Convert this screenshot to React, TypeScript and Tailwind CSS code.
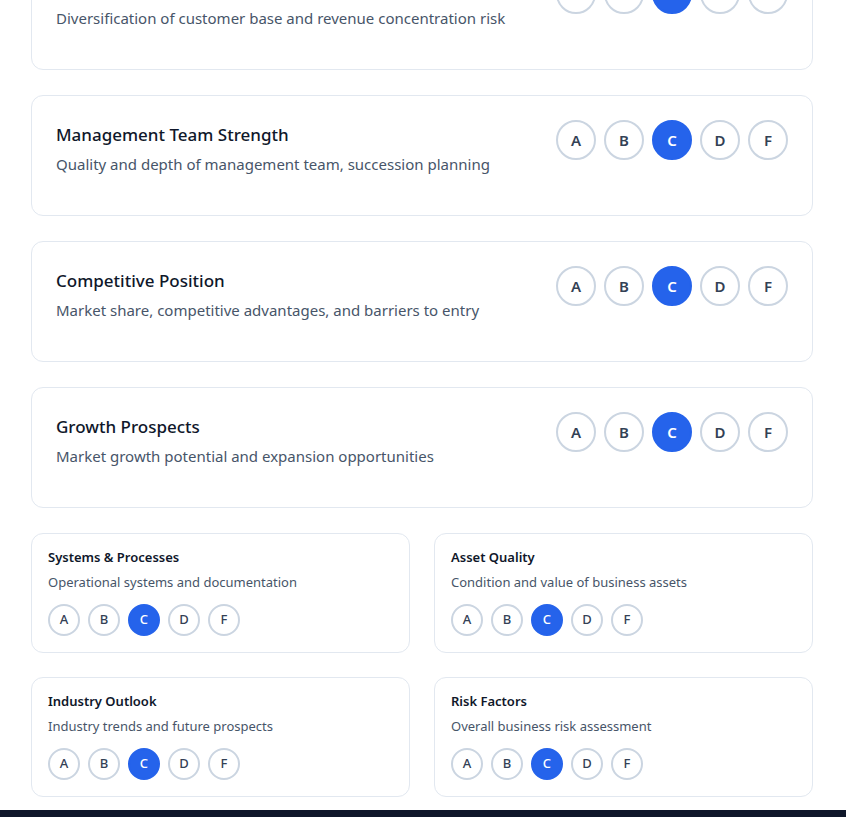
import React, { useState } from 'react';

const GRADES = ['A', 'B', 'C', 'D', 'F'];

const bigFactors = [
  { title: 'Customer Concentration', desc: 'Diversification of customer base and revenue concentration risk' },
  { title: 'Management Team Strength', desc: 'Quality and depth of management team, succession planning' },
  { title: 'Competitive Position', desc: 'Market share, competitive advantages, and barriers to entry' },
  { title: 'Growth Prospects', desc: 'Market growth potential and expansion opportunities' },
];

const smallFactors = [
  { title: 'Systems & Processes', desc: 'Operational systems and documentation' },
  { title: 'Asset Quality', desc: 'Condition and value of business assets' },
  { title: 'Industry Outlook', desc: 'Industry trends and future prospects' },
  { title: 'Risk Factors', desc: 'Overall business risk assessment' },
];

function GradePicker({ size }: { size: 'lg' | 'sm' }) {
  const [grade, setGrade] = useState('C');
  const base =
    size === 'lg'
      ? 'w-10 h-10 text-[15px] font-semibold'
      : 'w-8 h-8 text-[13px] font-medium';

  return (
    <div className="flex items-center gap-2 shrink-0">
      {GRADES.map((g) => (
        <button
          key={g}
          type="button"
          onClick={() => setGrade(g)}
          className={`${base} flex items-center justify-center rounded-full border-2 transition-colors ${
            grade === g
              ? 'bg-[#2563eb] border-[#2563eb] text-white'
              : 'bg-white border-[#cbd5e1] text-[#334155] hover:border-[#94a3b8]'
          }`}
        >
          {g}
        </button>
      ))}
    </div>
  );
}

export default function App() {
  return (
    <div className="min-h-screen bg-white font-['Noto_Sans',sans-serif] overflow-hidden">
      <div className="pl-[31px] pr-[33px] pb-[13px] -mt-[51px]">
        <div className="flex flex-col gap-[25px]">
          {bigFactors.map((f) => (
            <div
              key={f.title}
              className="h-[121px] rounded-xl border border-[#e2e8f0] bg-white p-6 flex items-start justify-between gap-6"
            >
              <div className="flex-1 min-w-0 pt-px">
                <h3 className="text-[17px] leading-7 font-medium text-[#0f172a]">{f.title}</h3>
                <p className="mt-[3px] text-[15px] leading-6 text-[#475569]">{f.desc}</p>
              </div>
              <GradePicker size="lg" />
            </div>
          ))}
        </div>

        <div className="mt-[25px] grid grid-cols-2 gap-6">
          {smallFactors.map((f) => (
            <div key={f.title} className="rounded-xl border border-[#e2e8f0] bg-white p-4">
              <h4 className="text-[13px] leading-[14px] font-semibold text-[#0f172a]">{f.title}</h4>
              <p className="mt-2 text-[13px] leading-5 text-[#475569]">{f.desc}</p>
              <div className="mt-3">
                <GradePicker size="sm" />
              </div>
            </div>
          ))}
        </div>
      </div>
      <footer className="h-24 bg-[#0f172a]" />
    </div>
  );
}
